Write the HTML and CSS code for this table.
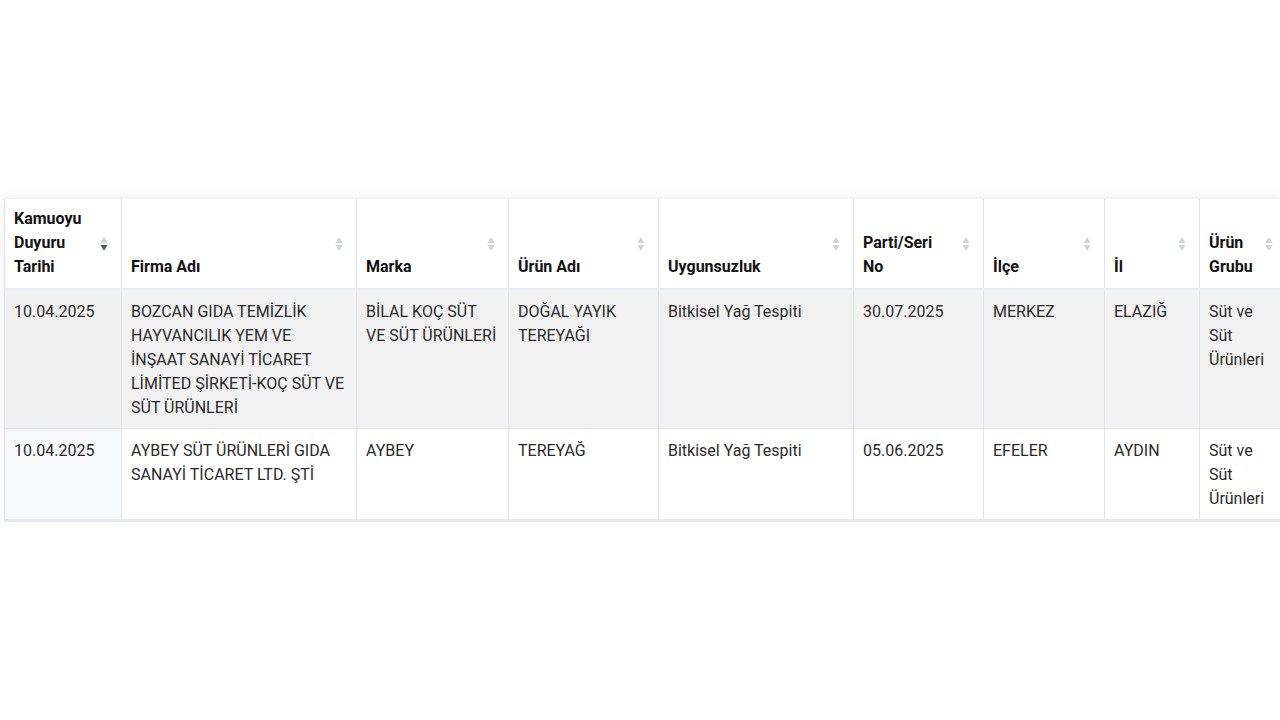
FILE: index.html
```html
<!DOCTYPE html>
<html lang="tr">
<head>
<meta charset="utf-8">
<title>Kamuoyu Duyurusu</title>
<link rel="stylesheet" href="styles.css">
</head>
<body>
<div class="page">
  <div class="table-wrap">
    <table class="grid">
      <colgroup>
        <col class="c1"><col class="c2"><col class="c3"><col class="c4"><col class="c5"><col class="c6"><col class="c7"><col class="c8"><col class="c9">
      </colgroup>
      <thead>
        <tr>
          <th><div class="th"><span class="lbl">Kamuoyu Duyuru Tarihi</span><svg class="sort" viewBox="0 0 8 16"><path class="up" d="M4 1 L7.5 7 L0.5 7 Z"/><path class="down active" d="M0.5 9 L7.5 9 L4 15 Z"/></svg></div></th>
          <th><div class="th"><span class="lbl">Firma Adı</span><svg class="sort" viewBox="0 0 8 16"><path class="up" d="M4 1 L7.5 7 L0.5 7 Z"/><path class="down" d="M0.5 9 L7.5 9 L4 15 Z"/></svg></div></th>
          <th><div class="th"><span class="lbl">Marka</span><svg class="sort" viewBox="0 0 8 16"><path class="up" d="M4 1 L7.5 7 L0.5 7 Z"/><path class="down" d="M0.5 9 L7.5 9 L4 15 Z"/></svg></div></th>
          <th><div class="th"><span class="lbl">Ürün Adı</span><svg class="sort" viewBox="0 0 8 16"><path class="up" d="M4 1 L7.5 7 L0.5 7 Z"/><path class="down" d="M0.5 9 L7.5 9 L4 15 Z"/></svg></div></th>
          <th><div class="th"><span class="lbl">Uygunsuzluk</span><svg class="sort" viewBox="0 0 8 16"><path class="up" d="M4 1 L7.5 7 L0.5 7 Z"/><path class="down" d="M0.5 9 L7.5 9 L4 15 Z"/></svg></div></th>
          <th><div class="th"><span class="lbl">Parti/Seri No</span><svg class="sort" viewBox="0 0 8 16"><path class="up" d="M4 1 L7.5 7 L0.5 7 Z"/><path class="down" d="M0.5 9 L7.5 9 L4 15 Z"/></svg></div></th>
          <th><div class="th"><span class="lbl">İlçe</span><svg class="sort" viewBox="0 0 8 16"><path class="up" d="M4 1 L7.5 7 L0.5 7 Z"/><path class="down" d="M0.5 9 L7.5 9 L4 15 Z"/></svg></div></th>
          <th><div class="th"><span class="lbl">İl</span><svg class="sort" viewBox="0 0 8 16"><path class="up" d="M4 1 L7.5 7 L0.5 7 Z"/><path class="down" d="M0.5 9 L7.5 9 L4 15 Z"/></svg></div></th>
          <th><div class="th"><span class="lbl">Ürün Grubu</span><svg class="sort" viewBox="0 0 8 16"><path class="up" d="M4 1 L7.5 7 L0.5 7 Z"/><path class="down" d="M0.5 9 L7.5 9 L4 15 Z"/></svg></div></th>
        </tr>
      </thead>
      <tbody>
        <tr class="odd">
          <td class="sorted">10.04.2025</td>
          <td>BOZCAN GIDA TEMİZLİK HAYVANCILIK YEM VE İNŞAAT SANAYİ TİCARET LİMİTED ŞİRKETİ-KOÇ SÜT VE SÜT ÜRÜNLERİ</td>
          <td>BİLAL KOÇ SÜT VE SÜT ÜRÜNLERİ</td>
          <td>DOĞAL YAYIK TEREYAĞI</td>
          <td>Bitkisel Yağ Tespiti</td>
          <td>30.07.2025</td>
          <td>MERKEZ</td>
          <td>ELAZIĞ</td>
          <td>Süt ve Süt Ürünleri</td>
        </tr>
        <tr class="even">
          <td class="sorted">10.04.2025</td>
          <td>AYBEY SÜT ÜRÜNLERİ GIDA SANAYİ TİCARET LTD. ŞTİ</td>
          <td>AYBEY</td>
          <td>TEREYAĞ</td>
          <td>Bitkisel Yağ Tespiti</td>
          <td>05.06.2025</td>
          <td>EFELER</td>
          <td>AYDIN</td>
          <td>Süt ve Süt Ürünleri</td>
        </tr>
      </tbody>
    </table>
  </div>
</div>
</body>
</html>
```

FILE: styles.css
```css
html, body {
  margin: 0;
  padding: 0;
  background: #ffffff;
  overflow: hidden;
  width: 1280px;
  height: 720px;
}

.page {
  padding-top: 199px;
  padding-left: 4px;
  font-family: Roboto, "Liberation Sans", Arial, sans-serif;
  font-size: 16px;
  line-height: 24px;
  color: #222;
}

.table-wrap {
  width: 1276px;
  box-shadow: 0 -3px 9px rgba(0, 0, 0, 0.07);
  border-bottom: 2px solid #e6e8eb;
}

.grid {
  border-collapse: collapse;
  table-layout: fixed;
  width: 1276px;
}

.c1 { width: 117px; }
.c2 { width: 235px; }
.c3 { width: 152px; }
.c4 { width: 150px; }
.c5 { width: 195px; }
.c6 { width: 130px; }
.c7 { width: 121px; }
.c8 { width: 95px; }
.c9 { width: 81px; }

.grid th,
.grid td {
  border: 1px solid #e1e4e8;
  text-align: left;
}

.grid th:last-child,
.grid td:last-child {
  border-right: none;
}

.grid th {
  padding: 0;
  background: #ffffff;
  font-weight: 700;
  color: #111;
  border-top: none;
  border-bottom: 2px solid #e8edf2;
  height: 89px;
  vertical-align: bottom;
}

.th {
  display: flex;
  align-items: flex-end;
  justify-content: space-between;
  padding: 9px 13px 9px 9px;
  height: 71px;
}

.lbl {
  padding-right: 12px;
}

.sort {
  width: 8px;
  height: 16px;
  align-self: center;
  flex: none;
  margin-bottom: -1px;
}

.sort path { fill: #d0d3d6; }
.sort path.active { fill: #555a5f; }

.grid td {
  padding: 10px 10px 8px 9px;
  vertical-align: top;
  color: #2a2a2a;
}

.odd td { background: #f1f1f1; }
.even td { background: #ffffff; }
.even td.sorted { background: #f8f9fb; }
.odd td.sorted { background: #f0f0f0; }
```
